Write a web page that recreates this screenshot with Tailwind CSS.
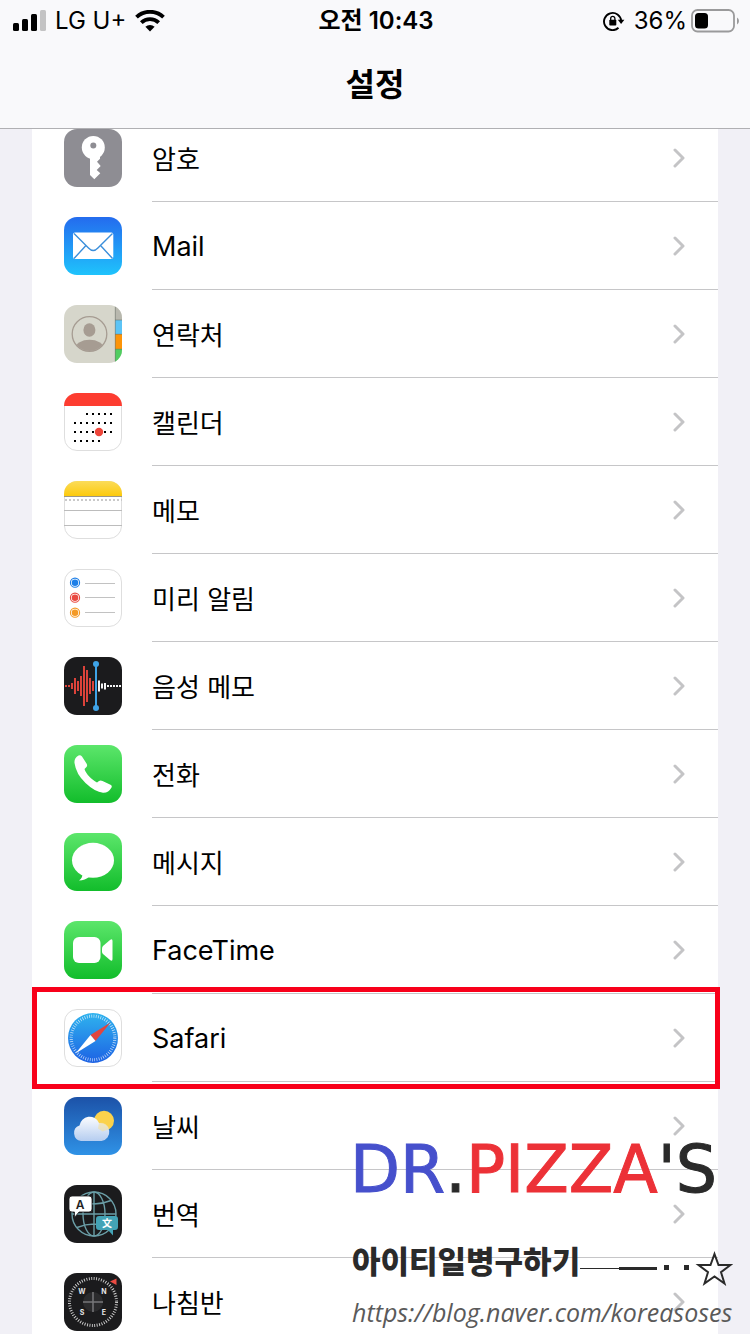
<!DOCTYPE html>
<html lang="ko">
  <head>
    <meta charset="UTF-8" />
    <meta name="viewport" content="width=device-width, initial-scale=1.0" />
    <title>설정</title>
    <script src="https://cdn.jsdelivr.net/npm/@tailwindcss/browser@4"></script>
  </head>
  <body class="relative h-screen overflow-hidden bg-[#f1f0f6] font-['Inter','Noto_Sans_CJK_KR',sans-serif] text-black">
    <svg class="absolute size-0" aria-hidden="true">
      <symbol id="chevron" viewBox="0 0 12 20">
        <path d="M2 2l8 8-8 8" fill="none" stroke="#c4c4c6" stroke-width="3" stroke-linecap="round" stroke-linejoin="round" />
      </symbol>
    </svg>

    <header class="relative z-10 h-[129px] border-b border-[#b0b0b3] bg-[#f9f9fb]">
      <div class="grid h-[42px] grid-cols-[1fr_auto_1fr] items-center pr-[11px] pl-[13px] text-2xl">
        <div class="flex items-center gap-[9px]">
          <svg class="h-[22px] w-[33px]" viewBox="0 0 33 22" aria-hidden="true">
            <rect x="0" y="13" width="6" height="8" rx="1.5" />
            <rect x="9" y="9" width="6" height="12" rx="1.5" />
            <rect x="18" y="4" width="6" height="17" rx="1.5" />
            <rect x="27" y="0" width="6" height="21" rx="1.5" fill="#c3c3c4" />
          </svg>
          <span>LG U+</span>
          <svg class="h-[22px] w-[30px]" viewBox="0 0 30 22" fill="none" stroke="#000" stroke-width="3.8" aria-hidden="true">
            <path d="M1.5 7.2a19.4 19.4 0 0 1 27 0" />
            <path d="M6.3 12.6a12.5 12.5 0 0 1 17.4 0" />
            <path d="M15 21.500l-4.6-4.7a6.6 6.6 0 0 1 9.2 0z" fill="#000" stroke="none" />
          </svg>
        </div>
        <div class="font-semibold">오전 10:43</div>
        <div class="flex items-center justify-end gap-1">
          <svg class="mr-[5px] h-5 w-[22px]" viewBox="0 0 22 20" aria-hidden="true">
            <path d="M15.5 16.8a8.6 8.6 0 1 1 2.700-6.800" fill="none" stroke="#000" stroke-width="1.9" />
            <path d="M14.8 8.7h6.600l-3.300 4.300z" />
            <rect x="6.300" y="8.700" width="7" height="5.800" rx="0.8" />
            <path d="M7.700 9.500V7.500a2.100 2.100 0 0 1 4.200 0v2" fill="none" stroke="#000" stroke-width="1.3" />
          </svg>
          <span>36%</span>
          <svg class="h-6 w-12" viewBox="0 0 48 24" aria-hidden="true">
            <rect x="1" y="1" width="42" height="21.5" rx="5.5" fill="none" stroke="#9a9a9b" stroke-width="1.8" />
            <rect x="4" y="4" width="13" height="15.5" rx="3.5" />
            <path d="M46 8.5q2 1 2 3.5t-2 3.5z" fill="#9a9a9b" />
          </svg>
        </div>
      </div>
      <h1 class="pt-[19px] text-center text-[32px] leading-[48px] font-bold">설정</h1>
    </header>

    <!-- the list is scrolled a little under the header -->
    <main class="mx-8 -mt-[15px] bg-white text-[26px]">
      <a href="#" class="flex h-[88px] items-center pl-8">
        <svg class="size-[58px] shrink-0" viewBox="0 0 58 58" aria-hidden="true">
          <rect width="58" height="58" rx="13" fill="#8e8d93" />
          <circle cx="29.3" cy="18.5" r="11.5" fill="#fff" />
          <path d="M26 28v18l4.3 4.3 6-6-3.6-3.3 4-4-3.7-4.2 3-3V28z" fill="#fff" />
          <circle cx="29.3" cy="16.5" r="3" fill="#8e8d93" />
        </svg>
        <span class="ml-[30px] flex h-full grow items-center justify-between border-b border-[#c6c6c8] pt-1 pr-[33px]">암호
          <svg class="-mt-1 h-5 w-3" aria-hidden="true"><use href="#chevron" /></svg>
        </span>
      </a>
      <a href="#" class="flex h-[88px] items-center pl-8">
        <svg class="size-[58px] shrink-0" viewBox="0 0 58 58" aria-hidden="true">
          <defs><linearGradient id="mail" x2="0" y2="1"><stop stop-color="#246bee" /><stop offset="1" stop-color="#1fc3fc" /></linearGradient></defs>
          <rect width="58" height="58" rx="13" fill="url(#mail)" />
          <rect x="9" y="15.5" width="40.3" height="26.5" rx="2" fill="#fff" />
          <path d="M10 16.5l14.5 14.5q4.700 5 9.400 0L48.5 16.5M10 41.5l11.5-12.5M48.5 41.5L37 29" fill="none" stroke="#3b8fdb" stroke-width="1.4" />
        </svg>
        <span class="ml-[30px] flex h-full grow items-center justify-between border-b border-[#c6c6c8] pt-1 pr-[33px] text-[27px]">Mail
          <svg class="-mt-1 h-5 w-3" aria-hidden="true"><use href="#chevron" /></svg>
        </span>
      </a>
      <a href="#" class="flex h-[88px] items-center pl-8">
        <svg class="size-[58px] shrink-0" viewBox="0 0 58 58" aria-hidden="true">
          <defs>
            <clipPath id="tile"><rect width="58" height="58" rx="13" /></clipPath>
            <clipPath id="face"><circle cx="25.5" cy="29" r="17" /></clipPath>
          </defs>
          <g clip-path="url(#tile)">
            <rect width="58" height="58" fill="#d6d6cb" />
            <rect x="51" width="7" height="15" fill="#b8b8ae" />
            <rect x="51" y="15" width="7" height="14" fill="#5cc4f6" />
            <rect x="51" y="29" width="7" height="15" fill="#fd9408" />
            <rect x="51" y="44" width="7" height="14" fill="#50cd60" />
            <path d="M51.3 0v58M51 15h7M51 29.3h7M51 44.2h7" stroke="#6f756c" stroke-opacity="0.6" />
          </g>
          <circle cx="25.5" cy="29" r="17.3" fill="none" stroke="#a69c92" stroke-width="1.3" />
          <ellipse cx="25.4" cy="25" rx="6" ry="6.7" fill="#a69c92" />
          <ellipse cx="25.5" cy="43" rx="14" ry="8.3" fill="#a69c92" clip-path="url(#face)" />
        </svg>
        <span class="ml-[30px] flex h-full grow items-center justify-between border-b border-[#c6c6c8] pt-1 pr-[33px]">연락처
          <svg class="-mt-1 h-5 w-3" aria-hidden="true"><use href="#chevron" /></svg>
        </span>
      </a>
      <a href="#" class="flex h-[88px] items-center pl-8">
        <svg class="size-[58px] shrink-0" viewBox="0 0 58 58" aria-hidden="true">
          <rect x="0.5" y="0.5" width="57" height="57" rx="12.5" fill="#fff" stroke="#dedede" />
          <path d="M0 13A13 13 0 0 1 13 0h32a13 13 0 0 1 13 13z" fill="#fd3c30" />
          <path d="M22 21h27M10 30h39M10 39h39M10 48h27" stroke="#000" stroke-width="2" stroke-dasharray="2 4" />
          <circle cx="35" cy="39" r="4.2" fill="#ee453a" />
        </svg>
        <span class="ml-[30px] flex h-full grow items-center justify-between border-b border-[#c6c6c8] pt-1 pr-[33px]">캘린더
          <svg class="-mt-1 h-5 w-3" aria-hidden="true"><use href="#chevron" /></svg>
        </span>
      </a>
      <a href="#" class="flex h-[88px] items-center pl-8">
        <svg class="size-[58px] shrink-0" viewBox="0 0 58 58" aria-hidden="true">
          <defs><linearGradient id="notes" x2="0" y2="1"><stop stop-color="#fbdc5a" /><stop offset="1" stop-color="#fdca0c" /></linearGradient></defs>
          <rect x="0.5" y="0.5" width="57" height="57" rx="12.5" fill="#fff" stroke="#dedede" />
          <path d="M0 15v-2A13 13 0 0 1 13 0h32a13 13 0 0 1 13 13v2z" fill="url(#notes)" />
          <path d="M0 15.5h58" stroke="#9b9788" />
          <path d="M1 19h57" stroke="#c9c9c9" stroke-width="2" stroke-dasharray="2 2" />
          <path d="M0 29.5h58M0 44.5h58" stroke="#bcbcbc" />
        </svg>
        <span class="ml-[30px] flex h-full grow items-center justify-between border-b border-[#c6c6c8] pt-1 pr-[33px]">메모
          <svg class="-mt-1 h-5 w-3" aria-hidden="true"><use href="#chevron" /></svg>
        </span>
      </a>
      <a href="#" class="flex h-[88px] items-center pl-8">
        <svg class="size-[58px] shrink-0" viewBox="0 0 58 58" aria-hidden="true">
          <rect x="0.5" y="0.5" width="57" height="57" rx="12.5" fill="#fff" stroke="#dedede" />
          <g stroke-width="1.1">
            <circle cx="11" cy="13.7" r="4.6" fill="none" stroke="#1d7fe8" /><circle cx="11" cy="13.7" r="3.3" fill="#1d7fe8" />
            <circle cx="11" cy="28.7" r="4.6" fill="none" stroke="#e94a41" /><circle cx="11" cy="28.7" r="3.3" fill="#e94a41" />
            <circle cx="11" cy="43.7" r="4.6" fill="none" stroke="#f49a26" /><circle cx="11" cy="43.7" r="3.3" fill="#f49a26" />
          </g>
          <path d="M21 14.5h30M21 28.5h30M21 43.5h30" stroke="#c2c2c2" />
        </svg>
        <span class="ml-[30px] flex h-full grow items-center justify-between border-b border-[#c6c6c8] pt-1 pr-[33px]">미리 알림
          <svg class="-mt-1 h-5 w-3" aria-hidden="true"><use href="#chevron" /></svg>
        </span>
      </a>
      <a href="#" class="flex h-[88px] items-center pl-8">
        <svg class="size-[58px] shrink-0" viewBox="0 0 58 58" aria-hidden="true">
          <rect width="58" height="58" rx="13" fill="#1b1b1d" />
          <path d="M2 28v2M5 28v2M8 26v6M11 21v16M14 24v10M17 19v20M20 9v40M23 13v32M26 21v16M29 24v10" stroke="#e5453c" stroke-width="1.9" />
          <path d="M35 23.5v11M38 26.5v5M41 26v6.5M44 28v2M47 28v2M50 28v2M53 28v2M56 28v2" stroke="#fff" stroke-width="1.9" />
          <path d="M32 7v44" stroke="#3fa4e8" stroke-width="2" />
          <circle cx="32" cy="7" r="3" fill="#3fa4e8" />
          <circle cx="32" cy="51" r="3" fill="#3fa4e8" />
        </svg>
        <span class="ml-[30px] flex h-full grow items-center justify-between border-b border-[#c6c6c8] pt-1 pr-[33px]">음성 메모
          <svg class="-mt-1 h-5 w-3" aria-hidden="true"><use href="#chevron" /></svg>
        </span>
      </a>
      <a href="#" class="flex h-[88px] items-center pl-8">
        <svg class="size-[58px] shrink-0" viewBox="0 0 58 58" aria-hidden="true">
          <defs><linearGradient id="green" x2="0" y2="1"><stop stop-color="#5ce66b" /><stop offset="1" stop-color="#12bd2b" /></linearGradient></defs>
          <rect width="58" height="58" rx="13" fill="url(#green)" />
          <path d="M14.5 10.5q2-1 3.5 1l4.5 7q1.5 2.5-.5 4l-1.5 1.5c1.5 5 7 10.5 12.5 13.5l2-1.5q1.5-1 3.5 0l7.5 3.5q2.5 1 1.5 3-3 5.5-8.5 5.200-8-.7-17.5-9.700T10.5 18q-.5-5 4-7.500z" fill="#fff" />
        </svg>
        <span class="ml-[30px] flex h-full grow items-center justify-between border-b border-[#c6c6c8] pt-1 pr-[33px]">전화
          <svg class="-mt-1 h-5 w-3" aria-hidden="true"><use href="#chevron" /></svg>
        </span>
      </a>
      <a href="#" class="flex h-[88px] items-center pl-8">
        <svg class="size-[58px] shrink-0" viewBox="0 0 58 58" aria-hidden="true">
          <rect width="58" height="58" rx="13" fill="url(#green)" />
          <ellipse cx="29" cy="27.3" rx="21" ry="17.5" fill="#fff" />
          <path d="M18.5 40q.5 4.500-3.500 7.500 6 0 10.5-4z" fill="#fff" />
        </svg>
        <span class="ml-[30px] flex h-full grow items-center justify-between border-b border-[#c6c6c8] pt-1 pr-[33px]">메시지
          <svg class="-mt-1 h-5 w-3" aria-hidden="true"><use href="#chevron" /></svg>
        </span>
      </a>
      <a href="#" class="flex h-[88px] items-center pl-8">
        <svg class="size-[58px] shrink-0" viewBox="0 0 58 58" aria-hidden="true">
          <rect width="58" height="58" rx="13" fill="url(#green)" />
          <rect x="9" y="16" width="27.5" height="26" rx="6" fill="#fff" />
          <path d="M38 27.5q0-1.500 1-2.500l7-6q2.500-2 2.500 1v18q0 3-2.500 1l-7-6q-1-1-1-2.500z" fill="#fff" />
        </svg>
        <span class="ml-[30px] flex h-full grow items-center justify-between border-b border-[#c6c6c8] pt-1 pr-[33px] text-[27px]">FaceTime
          <svg class="-mt-1 h-5 w-3" aria-hidden="true"><use href="#chevron" /></svg>
        </span>
      </a>
      <a href="#" class="relative flex h-[88px] items-center pl-8">
        <svg class="size-[58px] shrink-0" viewBox="0 0 58 58" aria-hidden="true">
          <defs><linearGradient id="safari" x2="0" y2="1"><stop stop-color="#2fb3ee" /><stop offset="1" stop-color="#1d62e4" /></linearGradient></defs>
          <rect x="0.5" y="0.5" width="57" height="57" rx="12.5" fill="#fff" stroke="#dedede" />
          <circle cx="29" cy="29" r="25" fill="url(#safari)" />
          <circle cx="29" cy="29" r="21.8" fill="none" stroke="#fff" stroke-opacity="0.75" stroke-width="3.2" stroke-dasharray="0.7 1.583" />
          <path d="M46.5 13.5L26.5 26l5 6z" fill="#e2453f" />
          <path d="M11.5 44.5L26.5 26l5 6z" fill="#fff" />
        </svg>
        <span class="ml-[30px] flex h-full grow items-center justify-between border-b border-[#c6c6c8] pt-1 pr-[33px] text-[27px]">Safari
          <svg class="-mt-1 h-5 w-3" aria-hidden="true"><use href="#chevron" /></svg>
        </span>
        <span class="absolute -top-[7px] -right-[2px] -bottom-[7px] left-0 border-5 border-[#f8001a]"></span>
      </a>
      <a href="#" class="flex h-[88px] items-center pl-8">
        <svg class="size-[58px] shrink-0" viewBox="0 0 58 58" aria-hidden="true">
          <defs>
            <linearGradient id="sky" x2="0" y2="1"><stop stop-color="#1c52a8" /><stop offset="1" stop-color="#2f92e6" /></linearGradient>
            <linearGradient id="cloud" x2="0" y2="1"><stop stop-color="#fbfcfe" /><stop offset="1" stop-color="#b5cdf0" /></linearGradient>
          </defs>
          <rect width="58" height="58" rx="13" fill="url(#sky)" />
          <circle cx="40" cy="23.8" r="10" fill="#fbd24c" />
          <path d="M17 44a8 8 0 0 1-1.5-15.5 10.2 10.2 0 0 1 19.5-2.500 9 9 0 1 1 2.500 18z" fill="url(#cloud)" />
          <path d="M35 26a9 9 0 0 1 10.5 6l-7 2.500-4.500-3z" fill="#f3dfa0" fill-opacity="0.6" />
        </svg>
        <span class="ml-[30px] flex h-full grow items-center justify-between border-b border-[#c6c6c8] pt-1 pr-[33px]">날씨
          <svg class="-mt-1 h-5 w-3" aria-hidden="true"><use href="#chevron" /></svg>
        </span>
      </a>
      <a href="#" class="flex h-[88px] items-center pl-8">
        <svg class="size-[58px] shrink-0" viewBox="0 0 58 58" aria-hidden="true">
          <rect width="58" height="58" rx="13" fill="#1b1b1d" />
          <g fill="none" stroke="#6a9da6" stroke-width="1.4">
            <circle cx="30" cy="29" r="22" />
            <ellipse cx="30" cy="29" rx="11" ry="22" />
            <path d="M30 7v44M8 29h44M13 15.5q17 7 34 0M13 42.5q17-7 34 0" />
          </g>
          <path d="M8 11h17q3 0 3 3v10q0 3-3 3H15l-4.5 5.5V27H8q-3 0-3-3V14q0-3 3-3z" fill="#fff" stroke="#1b1b1d" stroke-width="0.8" />
          <path d="M35 31h16q3 0 3 3v8q0 3-3 3h-2v5.5L44 45h-9q-3 0-3-3v-8q0-3 3-3z" fill="#43a3b6" />
          <text x="16" y="23.5" text-anchor="middle" font-size="12" font-weight="600" fill="#222">A</text>
          <text x="43" y="42" text-anchor="middle" font-size="10" font-weight="700" fill="#fff">文</text>
        </svg>
        <span class="ml-[30px] flex h-full grow items-center justify-between border-b border-[#c6c6c8] pt-1 pr-[33px]">번역
          <svg class="-mt-1 h-5 w-3" aria-hidden="true"><use href="#chevron" /></svg>
        </span>
      </a>
      <a href="#" class="flex h-[88px] items-center pl-8">
        <svg class="size-[58px] shrink-0" viewBox="0 0 58 58" aria-hidden="true">
          <rect width="58" height="58" rx="13" fill="#1b1b1d" />
          <circle cx="29" cy="29" r="23.5" fill="none" stroke="#d5d5d5" stroke-width="3" stroke-dasharray="0.9 1.561" />
          <circle cx="29" cy="29" r="10" fill="#2b2b2d" />
          <path d="M29 19v20M19 29h20" stroke="#77777a" stroke-width="1.5" />
          <path d="M46 8.5l6.5-3v6.5z" fill="#ea4b42" />
          <g text-anchor="middle" font-size="7" font-weight="700" fill="#e6e6e6">
            <text x="18" y="21">W</text>
            <text x="40" y="21">N</text>
            <text x="18" y="42">S</text>
            <text x="40" y="42">E</text>
          </g>
        </svg>
        <span class="ml-[30px] flex h-full grow items-center justify-between border-b border-[#c6c6c8] pt-1 pr-[33px]">나침반
          <svg class="-mt-1 h-5 w-3" aria-hidden="true"><use href="#chevron" /></svg>
        </span>
      </a>
    </main>

    <!-- blog signature lying over the list -->
    <div class="absolute right-3 bottom-[5px] w-[388px] text-[#2a2a2a]">
      <div class="flex items-baseline font-['DejaVu_Sans',sans-serif] text-[65px] leading-[76px] [-webkit-text-stroke:1px_currentColor]">
        <span class="text-[#4650cc]">DR</span>
        <span>.</span>
        <span class="text-[#ec3137]">PIZZA</span>
        <span>'S</span>
      </div>
      <div class="mt-[34px] flex h-12 items-center pl-[2px]">
        <span class="self-start font-['Noto_Sans_CJK_KR',sans-serif] text-[31px] leading-9 font-black">아이티일병구하기</span>
        <svg class="h-10 w-[153px]" viewBox="0 0 153 40" fill="none" stroke="#2a2a2a" aria-hidden="true">
          <path d="M0 22.5h39" />
          <path d="M39 22.5h38" stroke-width="3" />
          <path d="M84 21.5h5M104 21.5h5" stroke-width="5" />
          <path d="M134.5 8l4 11h12l-9.5 7.200 3.500 11.300-10-7-10 7 3.500-11.300-9.5-7.200h12z" stroke-width="2" />
        </svg>
      </div>
      <a href="https://blog.naver.com/koreasoses" class="mt-[5px] block pl-[2px] font-['Open_Sans',sans-serif] text-[25px] leading-[34px] text-[#5a5a5a] italic">https://blog.naver.com/koreasoses</a>
    </div>
  </body>
</html>
